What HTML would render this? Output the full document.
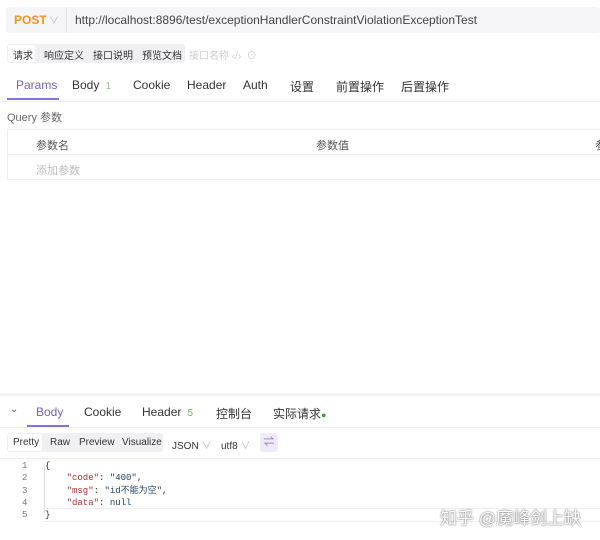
<!DOCTYPE html><html><head><style>
body{margin:0;width:600px;height:540px;background:#fff;font-family:"Liberation Sans","Noto Sans CJK SC",sans-serif;position:relative;overflow:hidden;color:#333}
.a{position:absolute;white-space:nowrap}
.mono{font-family:"Liberation Mono","Noto Sans CJK SC",monospace;font-size:9px}
</style></head><body>
<div class="a" style="left:6px;top:7px;width:594px;height:26px;background:#f5f5f7;border-radius:3px"></div>
<div class="a" style="left:66px;top:7px;width:1px;height:26px;background:#e6e6e6"></div>
<div class="a" style="left:14px;top:13px;font-size:12px;font-weight:bold;color:#f0932b">POST</div>
<div class="a" style="left:49px;top:12px;font-size:10px;color:#bbb">∨</div>
<div class="a" style="left:75px;top:13px;font-size:12px;color:#444">http://localhost:8896/test/exceptionHandlerConstraintViolationExceptionTest</div>
<div class="a" style="left:7px;top:44px;width:178px;height:19px;background:#f0f0f2;border-radius:3px"></div>
<div class="a" style="left:8px;top:45px;width:27px;height:17px;background:#fff;border-radius:2px"></div>
<div class="a" style="left:13px;top:47px;font-size:10px;color:#333">请求</div>
<div class="a" style="left:44px;top:47px;font-size:10px">响应定义</div>
<div class="a" style="left:93px;top:47px;font-size:10px">接口说明</div>
<div class="a" style="left:142px;top:47px;font-size:10px">预览文档</div>
<div class="a" style="left:189px;top:47px;font-size:10px;color:#ccc">接口名称 ‹/› &nbsp;⊙</div>
<div class="a" style="left:16px;top:78px;font-size:12px;color:#7a5fc0">Params</div>
<div class="a" style="left:7px;top:98px;width:52px;height:2px;background:#8c6fd4"></div>
<div class="a" style="left:72px;top:78px;font-size:12px">Body <span style="color:#9b9;font-size:10px">&nbsp;1</span></div>
<div class="a" style="left:133px;top:78px;font-size:12px">Cookie</div>
<div class="a" style="left:187px;top:78px;font-size:12px">Header</div>
<div class="a" style="left:243px;top:78px;font-size:12px">Auth</div>
<div class="a" style="left:290px;top:78px;font-size:12px">设置</div>
<div class="a" style="left:336px;top:78px;font-size:12px">前置操作</div>
<div class="a" style="left:401px;top:78px;font-size:12px">后置操作</div>
<div class="a" style="left:0;top:101px;width:600px;height:1px;background:#eee"></div>
<div class="a" style="left:7px;top:109px;font-size:11px;color:#666">Query 参数</div>
<div class="a" style="left:7px;top:129px;width:600px;height:51px;border:1px solid #eee;box-sizing:border-box"></div>
<div class="a" style="left:7px;top:154px;width:600px;height:1px;background:#eee"></div>
<div class="a" style="left:36px;top:137px;font-size:11px;color:#555">参数名</div>
<div class="a" style="left:316px;top:137px;font-size:11px;color:#555">参数值</div>
<div class="a" style="left:595px;top:137px;font-size:11px;color:#555">参</div>
<div class="a" style="left:36px;top:162px;font-size:11px;color:#bbb">添加参数</div>
<div class="a" style="left:0;top:393px;width:600px;height:3px;background:#f2f2f2"></div>
<div class="a" style="left:10px;top:404px;font-size:10px;color:#555">⌄</div>
<div class="a" style="left:36px;top:405px;font-size:12px;color:#7a5fc0">Body</div>
<div class="a" style="left:27px;top:425px;width:42px;height:2px;background:#8c6fd4"></div>
<div class="a" style="left:84px;top:405px;font-size:12px">Cookie</div>
<div class="a" style="left:142px;top:405px;font-size:12px">Header <span style="color:#6b6;font-size:10px">&nbsp;5</span></div>
<div class="a" style="left:216px;top:405px;font-size:12px">控制台</div>
<div class="a" style="left:273px;top:405px;font-size:12px">实际请求<span style="color:#3a3;font-size:9px">●</span></div>
<div class="a" style="left:0;top:427px;width:600px;height:1px;background:#eee"></div>
<div class="a" style="left:7px;top:433px;width:156px;height:19px;background:#f0f0f2;border-radius:3px"></div>
<div class="a" style="left:8px;top:434px;width:34px;height:17px;background:#fff;border-radius:2px"></div>
<div class="a" style="left:13px;top:437px;font-size:10px">Pretty</div>
<div class="a" style="left:50px;top:437px;font-size:10px">Raw</div>
<div class="a" style="left:79px;top:437px;font-size:10px">Preview</div>
<div class="a" style="left:122px;top:437px;font-size:10px">Visualize</div>
<div class="a" style="left:172px;top:437px;font-size:10px">JSON <span style="color:#bbb">∨</span></div>
<div class="a" style="left:221px;top:437px;font-size:10px">utf8 <span style="color:#bbb">∨</span></div>
<div class="a" style="left:260px;top:433px;width:18px;height:19px;background:#efeaf8;border-radius:3px;color:#8c6fd4;font-size:11px;text-align:center;line-height:19px">⇌</div>
<div class="a" style="left:0;top:458px;width:600px;height:1px;background:#eee"></div>
<div class="a" style="left:44px;top:467px;width:1px;height:46px;background:#ddd"></div>
<div class="a" style="left:44px;top:508px;width:556px;height:12px;border-top:1px solid #eee;border-bottom:1px solid #eee"></div>
<div class="a mono" style="left:22px;top:460px;line-height:12.3px;color:#777;text-align:right">1<br>2<br>3<br>4<br>5</div>
<div class="a mono" style="left:45px;top:460px;line-height:12.3px;color:#333">{<br>&nbsp;&nbsp;&nbsp;&nbsp;<span style="color:#a33">"code"</span>: <span style="color:#246">"400"</span>,<br>&nbsp;&nbsp;&nbsp;&nbsp;<span style="color:#a33">"msg"</span>: <span style="color:#246">"id不能为空"</span>,<br>&nbsp;&nbsp;&nbsp;&nbsp;<span style="color:#a33">"data"</span>: <span style="color:#246">null</span><br>}</div>
<div class="a" style="left:440px;top:504px;font-size:17px;color:#fff;text-shadow:0 0 2px #888,0 0 1px #666">知乎 @魔峰剑上缺</div>
</body></html>
